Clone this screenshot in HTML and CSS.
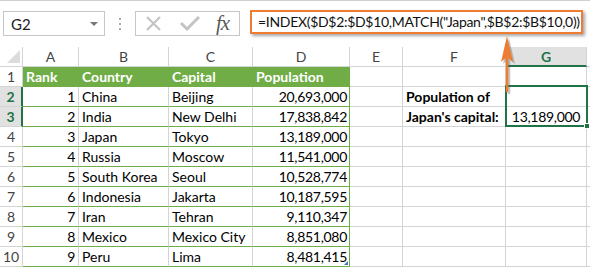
FILE: index.html
```html
<!DOCTYPE html>
<html>
<head>
<meta charset="utf-8">
<link rel="stylesheet" href="styles.css">
</head>
<body>
<div class="app">
  <div class="fbar">
    <div class="namebox"><span class="ref">G2</span><span class="caret"></span></div>
    <div class="dots"><i></i><i></i><i></i></div>
    <div class="fxbox">
      <svg class="ico-x" width="15" height="15" viewBox="0 0 15 15"><path d="M1 1L14 14M14 1L1 14" stroke="#c4c4c4" stroke-width="2.2" fill="none"/></svg>
      <svg class="ico-ok" width="20" height="15" viewBox="0 0 20 15"><path d="M1 7L7 13L19 1" stroke="#c4c4c4" stroke-width="3" fill="none"/></svg>
      <span class="fx">fx</span>
    </div>
    <div class="formula">=INDEX($D$2:$D$10,MATCH("Japan",$B$2:$B$10,0))</div>
  </div>

  <div class="sheet">
    <div class="corner"><span class="tri"></span></div>
    <div class="ch">A</div><div class="ch">B</div><div class="ch">C</div><div class="ch">D</div><div class="ch">E</div><div class="ch">F</div><div class="ch sel">G</div><div class="ch last"></div>

    <div class="rh">1</div>
    <div class="c th">Rank</div><div class="c th">Country</div><div class="c th">Capital</div><div class="c th">Population</div>
    <div class="c"></div><div class="c"></div><div class="c"></div><div class="c last"></div>

    <div class="rh sel">2</div>
    <div class="c td num">1</div><div class="c td">China</div><div class="c td">Beijing</div><div class="c td num end">20,693,000</div>
    <div class="c"></div><div class="c bold">Population of</div><div class="c"></div><div class="c last"></div>

    <div class="rh sel">3</div>
    <div class="c td num">2</div><div class="c td">India</div><div class="c td">New Delhi</div><div class="c td num end">17,838,842</div>
    <div class="c"></div><div class="c bold">Japan's capital:</div><div class="c center num2">13,189,000</div><div class="c last"></div>

    <div class="rh">4</div>
    <div class="c td num">3</div><div class="c td">Japan</div><div class="c td">Tokyo</div><div class="c td num end">13,189,000</div>
    <div class="c"></div><div class="c"></div><div class="c"></div><div class="c last"></div>

    <div class="rh">5</div>
    <div class="c td num">4</div><div class="c td">Russia</div><div class="c td">Moscow</div><div class="c td num end">11,541,000</div>
    <div class="c"></div><div class="c"></div><div class="c"></div><div class="c last"></div>

    <div class="rh">6</div>
    <div class="c td num">5</div><div class="c td">South Korea</div><div class="c td">Seoul</div><div class="c td num end">10,528,774</div>
    <div class="c"></div><div class="c"></div><div class="c"></div><div class="c last"></div>

    <div class="rh">7</div>
    <div class="c td num">6</div><div class="c td">Indonesia</div><div class="c td">Jakarta</div><div class="c td num end">10,187,595</div>
    <div class="c"></div><div class="c"></div><div class="c"></div><div class="c last"></div>

    <div class="rh">8</div>
    <div class="c td num">7</div><div class="c td">Iran</div><div class="c td">Tehran</div><div class="c td num end">9,110,347</div>
    <div class="c"></div><div class="c"></div><div class="c"></div><div class="c last"></div>

    <div class="rh">9</div>
    <div class="c td num">8</div><div class="c td">Mexico</div><div class="c td">Mexico City</div><div class="c td num end">8,851,080</div>
    <div class="c"></div><div class="c"></div><div class="c"></div><div class="c last"></div>

    <div class="rh">10</div>
    <div class="c td num">9</div><div class="c td">Peru</div><div class="c td">Lima</div><div class="c td num end resize">8,481,415</div>
    <div class="c"></div><div class="c"></div><div class="c"></div><div class="c last"></div>

    <div class="selection"><span class="handle"></span></div>
  </div>

  <svg class="arrow" width="24" height="62" viewBox="0 0 24 62">
    <g transform="translate(2,2)" opacity="0.35">
      <path d="M7 13V56" stroke="#555" stroke-width="2.5" fill="none"/>
      <path d="M7 0L13 26L7 21L1 26Z" fill="#555"/>
    </g>
    <path d="M7 13V56" stroke="#ed7d31" stroke-width="2.5" fill="none"/>
    <path d="M7 0L13 26L7 21L1 26Z" fill="#ed7d31"/>
  </svg>
</div>
</body>
</html>
```

FILE: styles.css
```css
* { box-sizing: border-box; }
html, body { margin: 0; padding: 0; background: #fff; }
body { font-family: Lato, "Liberation Sans", sans-serif; font-size: 14px; color: #000; }

.app { position: relative; width: 590px; height: 267px; overflow: hidden; background: #fff; }

.fbar {
  height: 47px;
  border-top: 1px solid #d0d0d0;
  display: flex;
  align-items: flex-start;
  padding-top: 10px;
}
.namebox {
  margin-left: 3px;
  width: 102px;
  height: 25px;
  border: 1px solid #c6c6c6;
  display: flex;
  align-items: center;
  justify-content: space-between;
  padding: 0 6px 0 7px;
  font-size: 15px;
  color: #222;
}
.caret {
  width: 0; height: 0;
  border-left: 4px solid transparent;
  border-right: 4px solid transparent;
  border-top: 4px solid #777;
}
.dots {
  width: 30px;
  height: 25px;
  display: flex;
  flex-direction: column;
  align-items: center;
  justify-content: center;
  gap: 3px;
}
.dots i { display: block; width: 2px; height: 2px; background: #a8a8a8; }
.fxbox {
  width: 105px;
  height: 25px;
  border: 1px solid #c6c6c6;
  display: flex;
  align-items: center;
  padding-left: 10px;
}
.ico-x { margin-right: 19px; }
.ico-ok { margin-right: 16px; }
.fx {
  font-family: "Liberation Serif", "DejaVu Serif", serif;
  font-style: italic;
  font-size: 21px;
  color: #5a5a5a;
  letter-spacing: -1px;
  line-height: 1;
}
.formula {
  margin-left: 10px;
  margin-top: -1px;
  width: 333px;
  height: 24px;
  border: 2px solid #ed7d31;
  box-shadow: 2px 2px 3px rgba(0,0,0,0.35);
  padding-left: 6px;
  font-size: 14px;
  letter-spacing: -0.3px;
  line-height: 20px;
  color: #111;
  white-space: nowrap;
  overflow: hidden;
}

.sheet {
  position: relative;
  display: grid;
  grid-template-columns: 23px 56px 90px 84px 97px 53px 103px 81px 3px;
  grid-auto-rows: 20px;
}
.sheet > div {
  border-right: 1px solid #d4d4d4;
  border-bottom: 1px solid #d4d4d4;
  line-height: 19px;
  white-space: nowrap;
  overflow: hidden;
}
.sheet > div.last { border-right: none; }
.corner { position: relative; }
.tri {
  position: absolute;
  right: 2px; bottom: 3px;
  width: 0; height: 0;
  border-left: 13px solid transparent;
  border-bottom: 13px solid #dcdcdc;
}
.ch { text-align: center; color: #444; font-size: 14px; }
.ch.sel { background: #e1e1e1; color: #217346; font-weight: bold; border-bottom: 2px solid #217346 !important; }
.rh { text-align: center; color: #444; font-size: 14px; }
.rh.sel { background: #e1e1e1; color: #217346; font-weight: bold; border-right: 2px solid #217346 !important; }

.c { padding: 0 3px; }
.th { background: #70ad47; color: #fff; font-weight: bold; border-right-color: #70ad47 !important; border-bottom-color: #70ad47 !important; }
.td { border-bottom-color: #70ad47 !important; }
.num { text-align: right; padding-right: 3px; letter-spacing: -0.3px; }
.num2 { letter-spacing: -0.3px; }
.end { border-right-color: #70ad47 !important; padding-right: 2px; }
.bold { font-weight: bold; }
.center { text-align: center; }
.resize { position: relative; }
.resize::after {
  content: "";
  position: absolute;
  right: 1px; bottom: 1px;
  width: 0; height: 0;
  border-left: 4px solid transparent;
  border-bottom: 4px solid #4472c4;
}

.sheet > .selection {
  position: absolute;
  left: 505px;
  top: 38px;
  width: 83px;
  height: 42px;
  border: 2px solid #217346;
  overflow: visible;
  pointer-events: none;
}
.handle {
  position: absolute;
  right: -4px; bottom: -4px;
  width: 6px; height: 6px;
  background: #217346;
  border: 1px solid #fff;
}

.arrow { position: absolute; left: 500px; top: 36px; }
```
